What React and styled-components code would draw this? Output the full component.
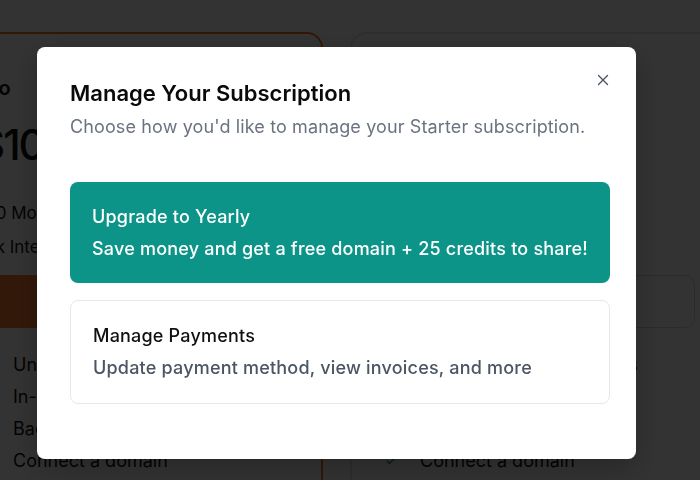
import React from "react";
import styled, { createGlobalStyle } from "styled-components";
import { X, Check } from "lucide-react";

const GlobalStyle = createGlobalStyle`
  html, body {
    margin: 0;
    padding: 0;
    background: #ffffff;
    overflow: hidden;
  }
  body {
    font-family: Inter, "Noto Sans", "Liberation Sans", sans-serif;
    -webkit-font-smoothing: antialiased;
  }
  * {
    box-sizing: border-box;
  }
`;

const Page = styled.div`
  display: flex;
  align-items: flex-start;
  gap: 27px;
  height: 480px;
  padding-top: 32px;
  margin-left: -57px;
  overflow: hidden;
`;

const PlanCard = styled.div`
  flex-shrink: 0;
  width: 380px;
  min-height: 520px;
  padding: 40px 33px 0 33px;
  border: 2px solid ${(p) => (p.$highlight ? "#f97316" : "#e5e7eb")};
  border-radius: 16px;
  color: #111111;
`;

const PlanName = styled.div`
  font-size: 20px;
  line-height: 28px;
  font-weight: 600;
`;

const Price = styled.div`
  margin-top: 18px;
  font-size: 42px;
  line-height: 50px;
  font-weight: 500;
  letter-spacing: -2px;
`;

const PlanLine = styled.div`
  margin-top: ${(p) => p.$gap || 10}px;
  font-size: 17px;
  line-height: 24px;
`;

const PlanButton = styled.div`
  margin-top: 16px;
  height: 53px;
  border-radius: 10px;
  background: ${(p) => (p.$primary ? "#fb7a30" : "#ffffff")};
  border: 1px solid ${(p) => (p.$primary ? "#fb7a30" : "#d4d4d8")};
`;

const Features = styled.ul`
  list-style: none;
  margin: 25px 0 0;
  padding: 0;
  display: flex;
  flex-direction: column;
  gap: 8px;
`;

const Feature = styled.li`
  display: flex;
  align-items: center;
  gap: 23px;
  font-size: 18px;
  line-height: 24px;
  color: #111111;

  svg {
    color: #0d9488;
    flex-shrink: 0;
  }
`;

const Overlay = styled.div`
  position: fixed;
  inset: 0;
  background: rgba(0, 0, 0, 0.8);
  display: flex;
  align-items: flex-start;
  padding: 47px 0 0 37px;
`;

const Modal = styled.div`
  position: relative;
  width: 599px;
  height: 412px;
  padding: 32px 26px 0 33px;
  background: #ffffff;
  border-radius: 8px;
  box-shadow: 0 10px 30px rgba(0, 0, 0, 0.25);
`;

const CloseButton = styled.button`
  position: absolute;
  top: 24px;
  right: 24px;
  width: 18px;
  height: 18px;
  padding: 0;
  border: none;
  background: none;
  color: #4b5563;
  display: flex;
  cursor: pointer;
`;

const Title = styled.h2`
  margin: 0;
  font-size: 22px;
  line-height: 28px;
  font-weight: 600;
  color: #0a0a0a;
`;

const Subtitle = styled.p`
  margin: 8px 0 0;
  font-size: 18px;
  line-height: 24px;
  color: #6b7280;
  letter-spacing: 0.12px;
`;

const Options = styled.div`
  margin-top: 43px;
  width: 540px;
  display: flex;
  flex-direction: column;
  gap: 17px;
`;

const Option = styled.button`
  display: flex;
  flex-direction: column;
  gap: 8px;
  width: 100%;
  padding: ${(p) => (p.$primary ? "22.5px 22px" : "23px 22px")};
  border: ${(p) => (p.$primary ? "none" : "1px solid #e5e7eb")};
  border-radius: 8px;
  background: ${(p) => (p.$primary ? "#0d9488" : "#ffffff")};
  font-family: inherit;
  text-align: left;
  cursor: pointer;
`;

const OptionTitle = styled.span`
  font-size: 18px;
  line-height: 24px;
  font-weight: 500;
  letter-spacing: 0.2px;
  color: ${(p) => (p.$primary ? "#ffffff" : "#111111")};
`;

const OptionText = styled.span`
  font-size: 18px;
  line-height: 24px;
  font-weight: 500;
  letter-spacing: 0.2px;
  color: ${(p) => (p.$primary ? "#ffffff" : "#4b5563")};
`;

const plans = [
  {
    name: "Pro",
    price: "$10",
    lines: ["100 Monthly credits", "10k Integrations"],
    features: ["Unlimited projects", "In-app editing", "Badge removal", "Connect a domain"],
    highlight: true,
  },
  {
    name: "Starter",
    price: "$5",
    lines: ["50 Monthly credits", "Basic integrations"],
    features: ["Unlimited private projects", "Custom components", "Team workspaces", "Connect a domain"],
    highlight: false,
  },
];

const options = [
  {
    title: "Upgrade to Yearly",
    text: "Save money and get a free domain + 25 credits to share!",
    primary: true,
  },
  {
    title: "Manage Payments",
    text: "Update payment method, view invoices, and more",
    primary: false,
  },
];

export default function App() {
  return (
    <>
      <GlobalStyle />
      <Page>
        {plans.map((plan) => (
          <PlanCard key={plan.name} $highlight={plan.highlight}>
            <PlanName>{plan.name}</PlanName>
            <Price>{plan.price}</Price>
            <PlanLine $gap={31}>{plan.lines[0]}</PlanLine>
            <PlanLine>{plan.lines[1]}</PlanLine>
            <PlanButton $primary={plan.highlight} />
            <Features>
              {plan.features.map((f) => (
                <Feature key={f}>
                  <Check size={12} strokeWidth={2.5} />
                  {f}
                </Feature>
              ))}
            </Features>
          </PlanCard>
        ))}
      </Page>

      <Overlay>
        <Modal role="dialog">
          <CloseButton aria-label="Close">
            <X size={18} strokeWidth={1.8} />
          </CloseButton>
          <Title>Manage Your Subscription</Title>
          <Subtitle>Choose how you'd like to manage your Starter subscription.</Subtitle>
          <Options>
            {options.map((o) => (
              <Option key={o.title} $primary={o.primary}>
                <OptionTitle $primary={o.primary}>{o.title}</OptionTitle>
                <OptionText $primary={o.primary}>{o.text}</OptionText>
              </Option>
            ))}
          </Options>
        </Modal>
      </Overlay>
    </>
  );
}
